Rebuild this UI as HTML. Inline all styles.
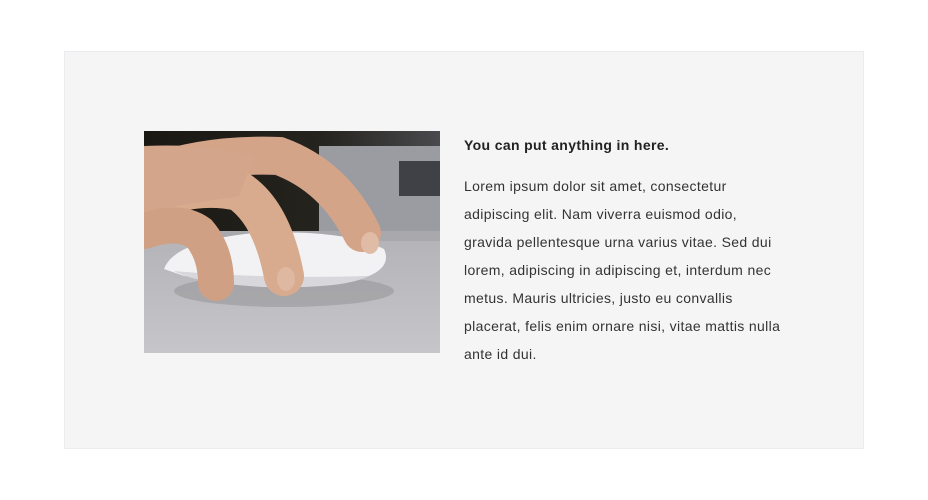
<!DOCTYPE html>
<html><head><meta charset="utf-8"><style>
html,body{margin:0;padding:0;background:#fff;width:928px;height:500px;overflow:hidden}
.panel{position:absolute;left:64px;top:51px;width:798px;height:396px;background:#f5f5f5;border:1px solid #ebebf0}
.img{position:absolute;left:144px;top:131px;width:296px;height:222px}
.txt{position:absolute;left:464px;top:134px;font-family:"Liberation Sans",sans-serif;color:#2b2b2b;font-size:14px;letter-spacing:0.35px;white-space:nowrap}
h3{margin:0;font-size:14px;font-weight:bold;line-height:22px;color:#222}
p{margin:16px 0 0;line-height:28px;color:#333}
</style></head><body>
<div class="panel"></div>
<svg class="img" viewBox="0 0 296 222" width="296" height="222">
<defs>
<linearGradient id="d" x1="0" y1="0" x2="0" y2="1"><stop offset="0" stop-color="#a4a4a8"/><stop offset="1" stop-color="#c6c6ca"/></linearGradient>
<linearGradient id="t" x1="0" y1="0" x2="1" y2="0"><stop offset="0" stop-color="#1a1812"/><stop offset="0.6" stop-color="#25231e"/><stop offset="1" stop-color="#4a4a4e"/></linearGradient>
</defs>
<rect width="296" height="222" fill="url(#d)"/>
<rect width="296" height="100" fill="url(#t)"/>
<rect x="175" y="15" width="121" height="85" fill="#9a9ca1"/>
<rect x="255" y="30" width="41" height="35" fill="#404147"/>
<rect x="0" y="100" width="296" height="10" fill="#a9a9ad"/>
<ellipse cx="140" cy="160" rx="110" ry="16" fill="#7d7d80" opacity="0.35"/>
<path d="M20 138 Q30 110 110 102 Q200 98 240 118 Q248 135 225 145 Q150 150 40 145 Z" fill="#f2f2f4"/>
<path d="M30 140 Q120 148 225 145 Q200 158 120 156 Q50 152 30 140Z" fill="#d8d8dc"/>
<g fill="none" stroke-linecap="round">
<path d="M0 45 Q60 22 135 25 Q190 45 218 102" stroke="#d4a489" stroke-width="38"/>
<path d="M0 72 Q50 50 95 60 Q128 82 140 145" stroke="#d8aa8e" stroke-width="40"/>
<path d="M0 100 Q35 88 55 102 Q72 122 72 152" stroke="#d0a084" stroke-width="36"/>
</g>
<path d="M0 15 Q60 12 110 25 L95 65 L0 80Z" fill="#d3a58b"/>
<ellipse cx="226" cy="112" rx="9" ry="11" fill="#e0bba5"/>
<ellipse cx="142" cy="148" rx="9" ry="12" fill="#dfb8a2"/>
</svg>
<div class="txt">
<h3>You can put anything in here.</h3>
<p>Lorem ipsum dolor sit amet, consectetur<br>adipiscing elit. Nam viverra euismod odio,<br>gravida pellentesque urna varius vitae. Sed dui<br>lorem, adipiscing in adipiscing et, interdum nec<br>metus. Mauris ultricies, justo eu convallis<br>placerat, felis enim ornare nisi, vitae mattis nulla<br>ante id dui.</p>
</div>
</body></html>
